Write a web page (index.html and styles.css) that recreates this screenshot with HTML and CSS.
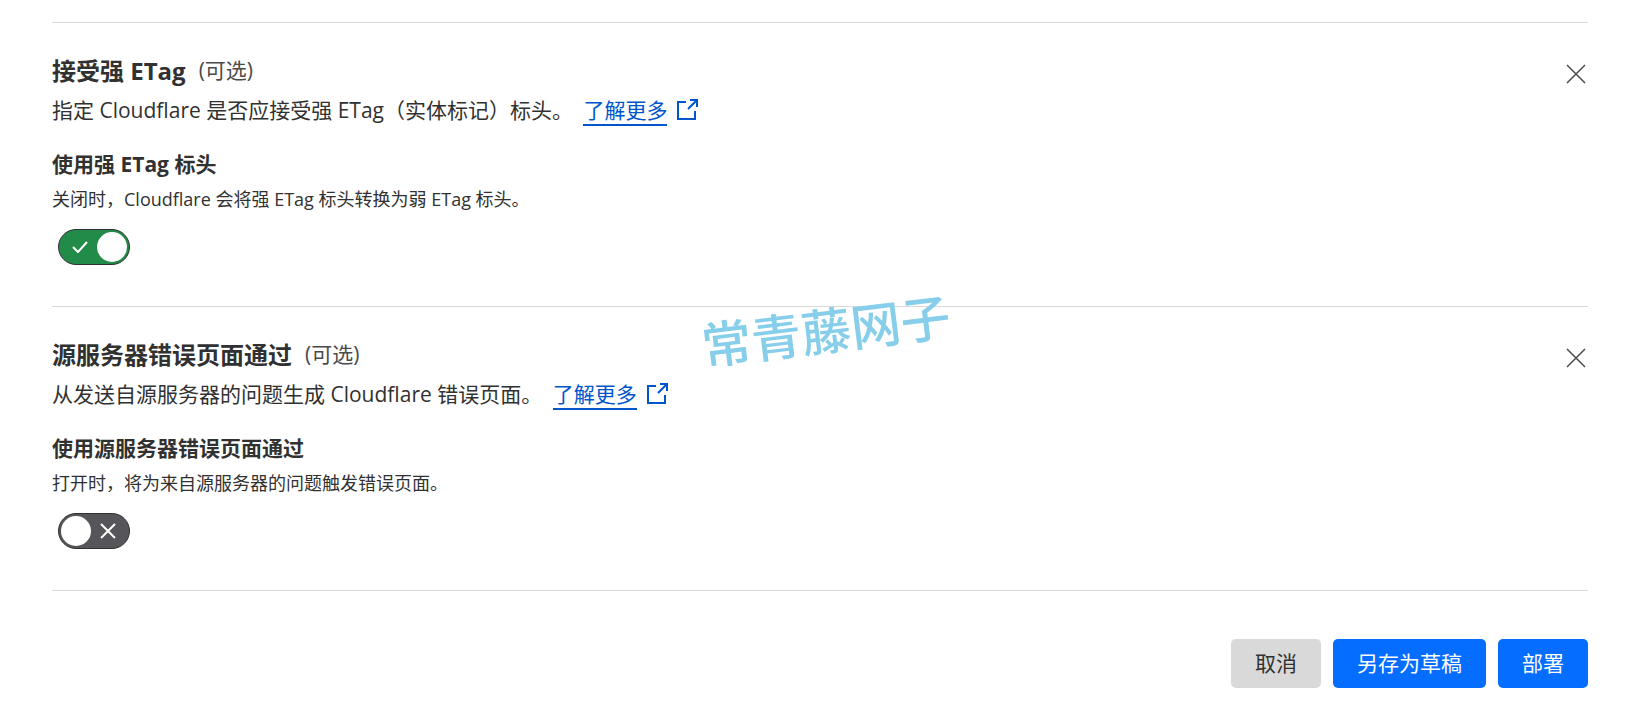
FILE: index.html
```html
<!DOCTYPE html>
<html lang="zh-CN">
<head>
    <meta charset="UTF-8">
    <meta name="viewport" content="width=device-width, initial-scale=1.0">
    <title>Cloudflare 规则设置</title>
    <link rel="stylesheet" href="styles.css">
</head>
<body>
    <main>
        <section class="setting">
            <div class="setting-body">
                <h2>接受强 ETag <span class="optional">(可选)</span></h2>
                <p class="desc">指定 Cloudflare 是否应接受强 ETag（实体标记）标头。
                    <a href="#" class="more"><span>了解更多</span><svg width="21" height="21" viewBox="0 0 21 21"><path d="M9 3H1v17h17v-8M13 1h7v7M20 1l-9 9"/></svg></a>
                </p>
                <label class="field-label" for="strong-etag">使用强 ETag 标头</label>
                <p class="hint">关闭时，Cloudflare 会将强 ETag 标头转换为弱 ETag 标头。</p>
                <div class="toggle">
                    <input type="checkbox" id="strong-etag" checked>
                    <svg class="icon-on" width="16" height="12" viewBox="0 0 16 12"><path d="M1 6l5 5L15 1"/></svg>
                    <svg class="icon-off" width="16" height="16" viewBox="0 0 16 16"><path d="M1 1l14 14M15 1L1 15"/></svg>
                </div>
            </div>
            <button type="button" class="close" aria-label="关闭">
                <svg width="20" height="20" viewBox="0 0 20 20"><path d="M1 1l18 18M19 1L1 19"/></svg>
            </button>
        </section>

        <section class="setting">
            <div class="setting-body">
                <h2>源服务器错误页面通过 <span class="optional">(可选)</span></h2>
                <p class="desc">从发送自源服务器的问题生成 Cloudflare 错误页面。
                    <a href="#" class="more"><span>了解更多</span><svg width="21" height="21" viewBox="0 0 21 21"><path d="M9 3H1v17h17v-8M13 1h7v7M20 1l-9 9"/></svg></a>
                </p>
                <label class="field-label" for="error-page">使用源服务器错误页面通过</label>
                <p class="hint">打开时，将为来自源服务器的问题触发错误页面。</p>
                <div class="toggle">
                    <input type="checkbox" id="error-page">
                    <svg class="icon-on" width="16" height="12" viewBox="0 0 16 12"><path d="M1 6l5 5L15 1"/></svg>
                    <svg class="icon-off" width="16" height="16" viewBox="0 0 16 16"><path d="M1 1l14 14M15 1L1 15"/></svg>
                </div>
            </div>
            <button type="button" class="close" aria-label="关闭">
                <svg width="20" height="20" viewBox="0 0 20 20"><path d="M1 1l18 18M19 1L1 19"/></svg>
            </button>
        </section>

        <div class="actions">
            <button type="button" class="btn">取消</button>
            <button type="button" class="btn btn-primary">另存为草稿</button>
            <button type="button" class="btn btn-primary">部署</button>
        </div>
    </main>
    <div class="watermark">常青藤网子</div>
</body>
</html>
```

FILE: styles.css
```css
body {
    position: relative;
    margin: 0;
    background-color: #fff;
    color: #313131;
    font-family: "Open Sans", "Noto Sans CJK SC", sans-serif;
    font-size: 21px;
    line-height: 32px;
}
main {
    padding: 22px 64px 39px 52px;
}
h2, p {
    margin: 0;
}
svg {
    fill: none;
    stroke: currentColor;
    stroke-width: 2;
}
.setting {
    display: flex;
    justify-content: space-between;
    align-items: flex-start;
    padding: 31px 0 41px;
    border-top: 1px solid #d9d9d9;
}
.setting h2 {
    display: flex;
    gap: 13px;
    margin-bottom: 6px;
    font-size: 24px;
    line-height: 34px;
}
.optional {
    color: #4a4a4a;
    font-size: 21px;
    font-weight: 400;
    line-height: 32px;
}
.desc {
    margin-bottom: 22px;
}
.more {
    display: inline-flex;
    gap: 10px;
    margin-left: 5px;
    color: #0055cc;
    text-decoration: none;
    vertical-align: top;
}
.more svg {
    margin-top: 5px;
}
.more span {
    height: 30px;
    border-bottom: 2px solid #0055cc;
}
.field-label {
    display: block;
    margin-bottom: 5px;
    font-weight: bold;
}
.hint {
    margin-bottom: 16px;
    font-size: 18px;
    line-height: 28px;
}
.toggle {
    position: relative;
    width: 72px;
    height: 36px;
    margin-left: 6px;
    color: white;
}
.toggle input {
    display: flex;
    align-items: center;
    appearance: none;
    box-sizing: border-box;
    width: 100%;
    height: 100%;
    margin: 0;
    padding: 0 2px;
    border: 1px solid #313131;
    border-radius: 18px;
    background-color: #56565a;
    cursor: pointer;
}
.toggle input::before {
    content: "";
    width: 30px;
    height: 30px;
    border-radius: 50%;
    background-color: white;
}
.toggle input:checked {
    justify-content: flex-end;
    background-color: #228b49;
}
.toggle svg {
    position: absolute;
    pointer-events: none;
}
.icon-on {
    top: 12px;
    left: 14px;
    display: none;
}
.icon-off {
    top: 10px;
    right: 14px;
}
.toggle input:checked ~ .icon-on {
    display: block;
}
.toggle input:checked ~ .icon-off {
    display: none;
}
.close {
    display: flex;
    margin-top: 9px;
    padding: 1px 2px;
    border: none;
    background: none;
    color: #4a4a4f;
    cursor: pointer;
}
.close svg {
    stroke-width: 1.5;
}
.actions {
    display: flex;
    justify-content: flex-end;
    gap: 12px;
    padding-top: 48px;
    border-top: 1px solid #d9d9d9;
}
.btn {
    padding: 8px 24px 9px;
    border: none;
    border-radius: 5px;
    background-color: #d9d9d9;
    color: #313131;
    font-family: inherit;
    font-size: 21px;
    line-height: 32px;
    cursor: pointer;
}
.btn-primary {
    background-color: #056dff;
    color: white;
}
.watermark {
    position: absolute;
    top: 331px;
    left: 50%;
    color: #87ceeb;
    font-size: 50px;
    font-weight: 500;
    line-height: 1;
    white-space: nowrap;
    transform: translate(-50%, -50%) rotate(-7deg);
    pointer-events: none;
}
```
